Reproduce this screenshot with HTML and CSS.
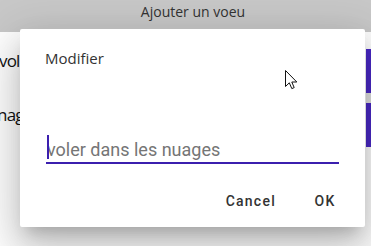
FILE: index.html
```html
<!DOCTYPE html>
<html lang="fr">
<head>
<meta charset="utf-8">
<title>Ajouter un voeu</title>
<link rel="stylesheet" href="styles.css">
</head>
<body>
<div class="app">
  <header class="topbar">Ajouter un voeu</header>
  <main class="list">
    <div class="row">
      <span class="row-text">vol</span>
      <span class="row-btn"></span>
    </div>
    <div class="sep"></div>
    <div class="row">
      <span class="row-text shift">nag</span>
      <span class="row-btn"></span>
    </div>
  </main>

  <div class="dialog">
    <div class="dialog-title">Modifier</div>
    <div class="dialog-content">
      <div class="field">
        <span class="caret"></span>
        <span class="field-text">voler dans les nuages</span>
      </div>
    </div>
    <div class="dialog-actions">
      <button class="btn">Cancel</button>
      <button class="btn">OK</button>
    </div>
  </div>

  <svg class="pointer" width="13" height="20" viewBox="0 0 13 20">
    <path d="M0.5 0.5 L0.5 16.5 L4.3 12.8 L6.8 18.6 L9.2 17.6 L6.8 12 L11.8 12 Z" fill="#fff" stroke="#111" stroke-width="1" stroke-linejoin="miter"/>
  </svg>
</div>
</body>
</html>
```
FILE: styles.css
```css
* { box-sizing: border-box; }
html, body { margin: 0; padding: 0; }
body {
  width: 371px;
  height: 246px;
  overflow: hidden;
  background: #ffffff;
  font-family: "Open Sans", "Noto Sans", sans-serif;
}
.app {
  position: relative;
  width: 371px;
  height: 246px;
  overflow: hidden;
  background: #fff;
}
.topbar {
  height: 32px;
  background: #c8c8c8;
  color: #333;
  font-size: 14px;
  line-height: 20px;
  padding: 2px 0 0 15px;
  text-align: center;
}
.list {
  display: flex;
  flex-direction: column;
  padding-top: 17px;
}
.row {
  height: 44px;
  display: flex;
  justify-content: space-between;
  align-items: flex-start;
}
.row-text {
  font-size: 17px;
  line-height: 24px;
  letter-spacing: -0.8px;
  color: #111;
  margin-left: -1px;
  white-space: nowrap;
}
.row-text.shift { margin-left: -3px; }
.row-btn {
  width: 5px;
  height: 44px;
  background: #4a29c7;
  flex: none;
}
.sep {
  height: 10px;
  background: linear-gradient(to left, #e4e4e4 5px, transparent 5px);
}
.dialog {
  position: absolute;
  left: 20px;
  top: 29px;
  width: 345px;
  height: 198px;
  background: #fff;
  border-radius: 2px;
  box-shadow: 0 11px 15px -7px rgba(0,0,0,.2), 0 24px 38px 3px rgba(0,0,0,.14), 0 9px 46px 8px rgba(0,0,0,.12);
  display: flex;
  flex-direction: column;
}
.dialog-title {
  padding: 19px 24px 0 25px;
  font-size: 15px;
  line-height: 20px;
  color: #333;
}
.dialog-content {
  padding: 0 26px;
  margin-top: 70px;
}
.field {
  position: relative;
  height: 26px;
  border-bottom: 2px solid #3b1fae;
  padding-left: 1px;
  font-family: Roboto, sans-serif;
  font-size: 18px;
  line-height: 23px;
  color: #757575;
}
.caret {
  position: absolute;
  left: 1px;
  top: -3px;
  width: 2px;
  height: 24px;
  background: #3b1fae;
}
.dialog-actions {
  margin-top: auto;
  display: flex;
  justify-content: flex-end;
  gap: 9px;
  padding: 8px;
}
.btn {
  min-width: 64px;
  height: 36px;
  padding: 0 8px;
  border: none;
  background: transparent;
  font-family: Roboto, sans-serif;
  font-weight: 500;
  font-size: 14px;
  letter-spacing: 1.25px;
  color: #333;
  text-align: center;
}
.pointer {
  position: absolute;
  left: 285px;
  top: 70px;
}
```
